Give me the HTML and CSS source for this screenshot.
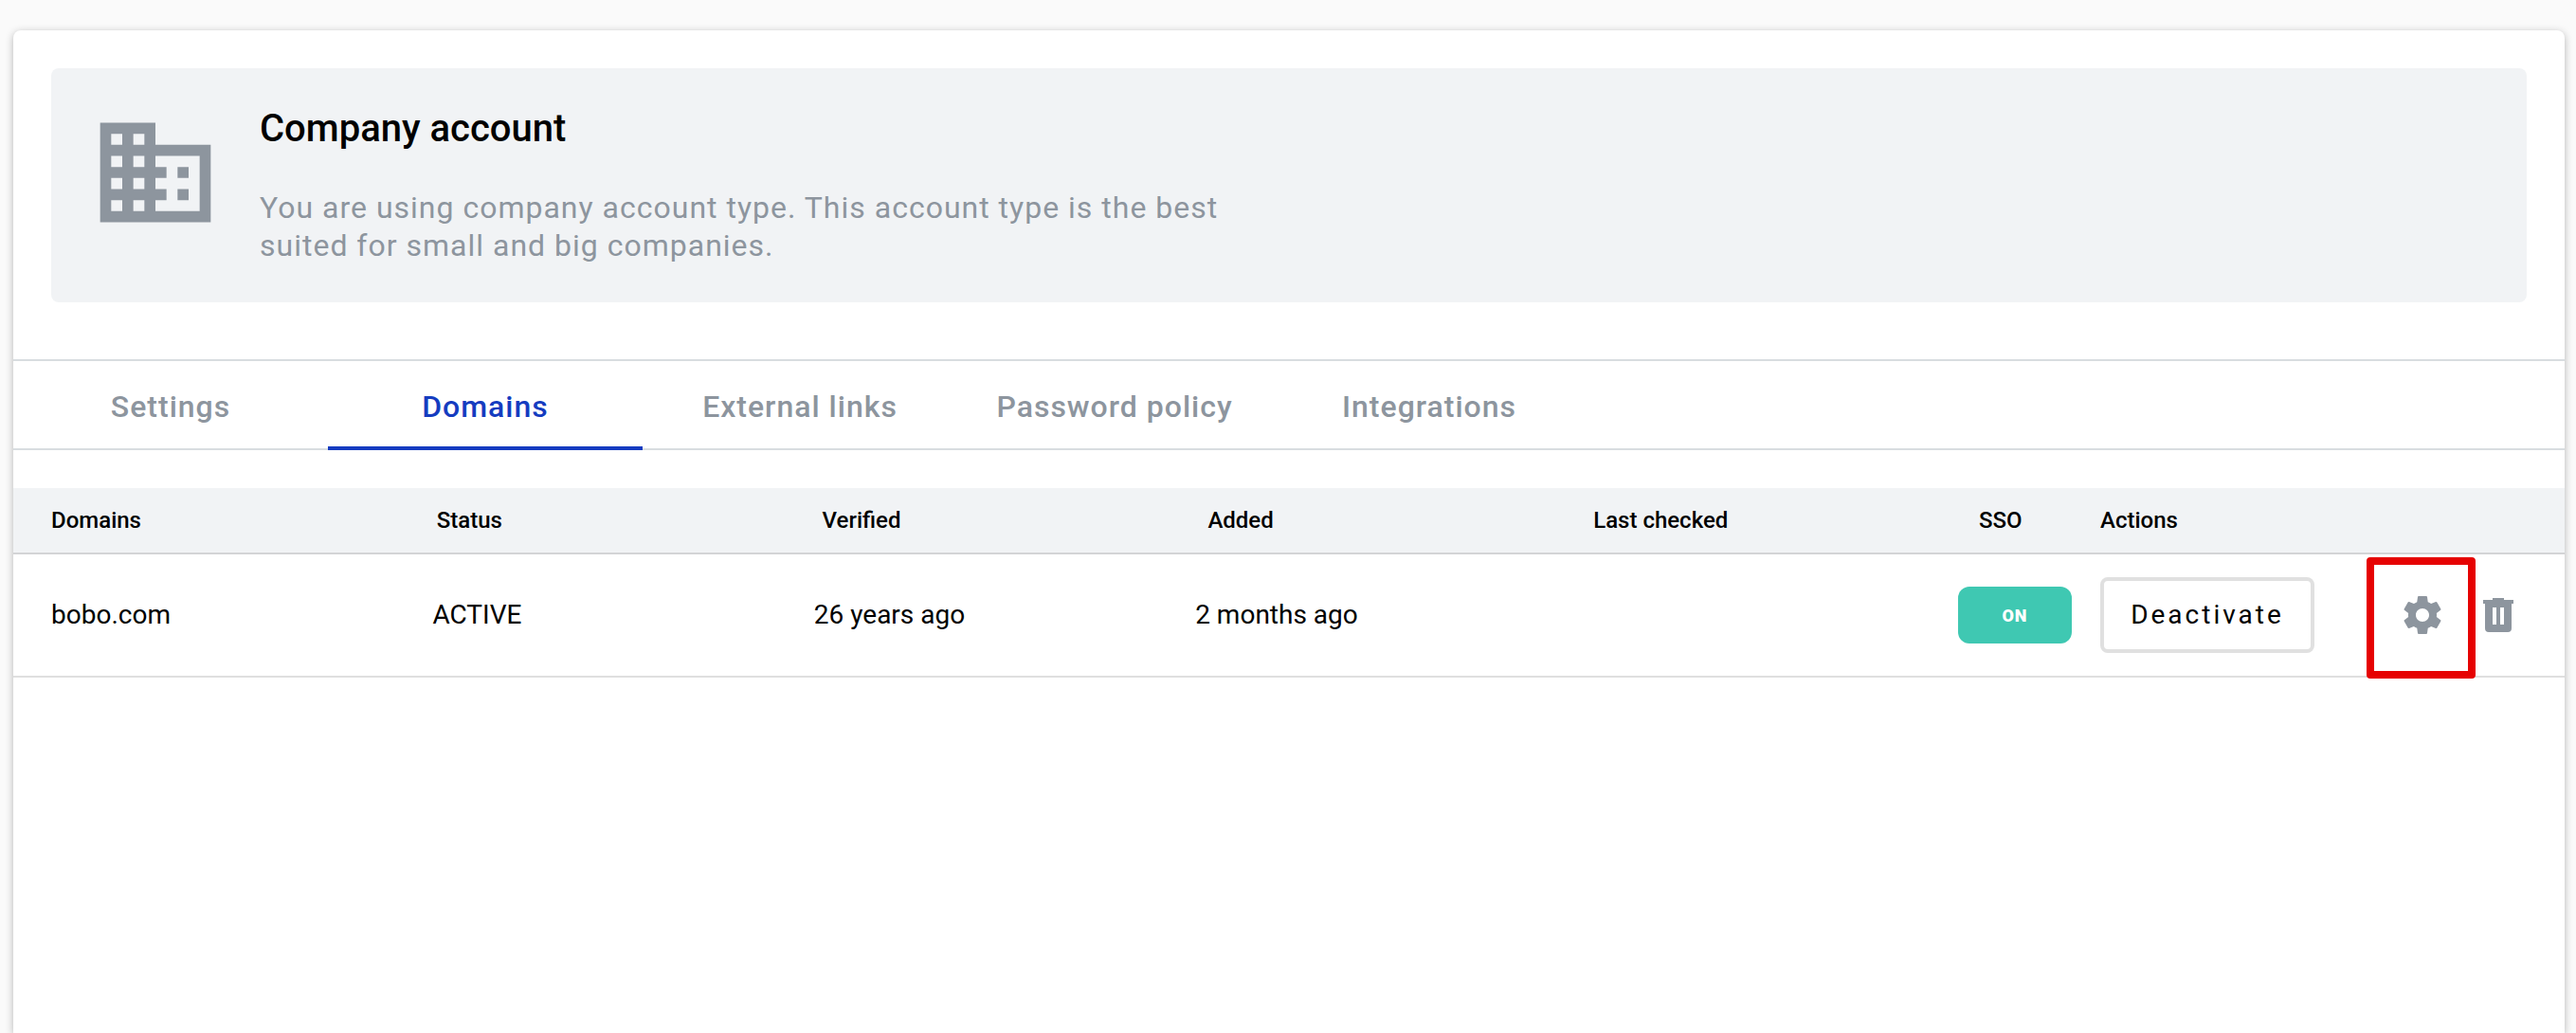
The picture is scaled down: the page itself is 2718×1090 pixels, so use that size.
FILE: index.html
```html
<!DOCTYPE html>
<html lang="en">
<head>
  <meta charset="utf-8">
  <meta name="viewport" content="width=device-width, initial-scale=1">
  <title>Company account</title>
  <link rel="stylesheet" href="styles.css">
</head>
<body>
  <main class="card">
    <section class="banner">
      <svg class="banner-icon" viewBox="0 0 24 24" aria-hidden="true">
        <path d="M12 7V3H2v18h20V7H12zM6 19H4v-2h2v2zm0-4H4v-2h2v2zm0-4H4V9h2v2zm0-4H4V5h2v2zm4 12H8v-2h2v2zm0-4H8v-2h2v2zm0-4H8V9h2v2zm0-4H8V5h2v2zm10 12h-8v-2h2v-2h-2v-2h2v-2h-2V9h8v10zm-2-8h-2v2h2v-2zm0 4h-2v2h2v-2z"/>
      </svg>
      <div class="banner-body">
        <h1 class="banner-title">Company account</h1>
        <p class="banner-text">You are using company account type. This account type is the best suited for small and big companies.</p>
      </div>
    </section>

    <nav class="tabs">
      <a class="tab" href="#settings">Settings</a>
      <a class="tab tab-active" href="#domains" aria-current="page">Domains</a>
      <a class="tab" href="#links">External links</a>
      <a class="tab" href="#policy">Password policy</a>
      <a class="tab" href="#integrations">Integrations</a>
    </nav>

    <table class="domains">
      <thead>
        <tr class="head-row">
          <th scope="col">Domains</th>
          <th scope="col">Status</th>
          <th scope="col">Verified</th>
          <th scope="col">Added</th>
          <th scope="col">Last checked</th>
          <th scope="col">SSO</th>
          <th scope="col">Actions</th>
        </tr>
      </thead>
      <tbody>
        <tr class="data-row">
          <td>bobo.com</td>
          <td>ACTIVE</td>
          <td>26 years ago</td>
          <td>2 months ago</td>
          <td></td>
          <td><button class="sso" type="button" aria-pressed="true">ON</button></td>
          <td class="actions">
            <button class="deactivate" type="button">Deactivate</button>
            <button class="icon-button highlighted" type="button" aria-label="Domain settings">
              <svg class="icon" viewBox="0 0 24 24" aria-hidden="true">
                <path d="M19.43 12.98c.04-.32.07-.64.07-.98s-.03-.66-.07-.98l2.11-1.65c.19-.15.24-.42.12-.64l-2-3.46c-.12-.22-.39-.3-.61-.22l-2.49 1c-.52-.4-1.08-.73-1.69-.98l-.38-2.65C14.46 2.18 14.25 2 14 2h-4c-.25 0-.46.18-.49.42l-.38 2.65c-.61.25-1.17.59-1.69.98l-2.49-1c-.23-.09-.49 0-.61.22l-2 3.46c-.13.22-.07.49.12.64l2.11 1.65c-.04.32-.07.65-.07.98s.03.66.07.98l-2.11 1.65c-.19.15-.24.42-.12.64l2 3.46c.12.22.39.3.61.22l2.49-1c.52.4 1.08.73 1.69.98l.38 2.65c.03.24.24.42.49.42h4c.25 0 .46-.18.49-.42l.38-2.65c.61-.25 1.17-.59 1.69-.98l2.49 1c.23.09.49 0 .61-.22l2-3.46c.12-.22.07-.49-.12-.64l-2.11-1.65zM12 15.5c-1.93 0-3.5-1.57-3.5-3.5s1.57-3.5 3.5-3.5 3.5 1.57 3.5 3.5-1.57 3.5-3.5 3.5z"/>
              </svg>
            </button>
            <button class="icon-button" type="button" aria-label="Delete domain">
              <svg class="icon" viewBox="0 0 24 24" aria-hidden="true">
                <path fill-rule="evenodd" d="M9 3h6v1h5v2h-1v13a2 2 0 0 1-2 2H7a2 2 0 0 1-2-2V6H4V4h5zM9 8v9h2V8zM13 8v9h2V8z"/>
              </svg>
            </button>
          </td>
        </tr>
      </tbody>
    </table>
  </main>
</body>
</html>
```
FILE: styles.css
```css
*,
*::before,
*::after {
  box-sizing: border-box;
}

body {
  display: flex;
  flex-direction: column;
  min-height: 100vh;
  margin: 0;
  padding: 32px 12px 0 14px;
  background: #fafafa;
  color: #000;
  font-family: Roboto, "Liberation Sans", sans-serif;
}

button {
  font-family: inherit;
  cursor: pointer;
}

.card {
  flex: 1;
  background: #fff;
  border-radius: 8px 8px 0 0;
  box-shadow: 0 2px 8px rgba(0, 0, 0, 0.28);
}

.banner {
  display: flex;
  gap: 40px;
  margin: 40px 40px 60px;
  padding: 40px;
  background: #f1f3f5;
  border-radius: 8px;
}

.banner-icon {
  flex: none;
  width: 140px;
  height: 140px;
  fill: #8d959e;
}

.banner-title {
  margin: 0 0 40px;
  font-size: 40px;
  line-height: 47px;
  font-weight: 500;
}

.banner-text {
  max-width: 1060px;
  margin: 0;
  color: #8d959e;
  font-size: 32px;
  line-height: 40px;
  letter-spacing: 1px;
}

.tabs {
  display: flex;
  margin-bottom: 40px;
  border-top: 2px solid #d8dde0;
  box-shadow: inset 0 -2px #d8dde0;
}

.tab {
  flex: 0 1 332px;
  padding: 28px 0 22px;
  border-bottom: 4px solid transparent;
  color: #8d959e;
  font-size: 32px;
  line-height: 40px;
  font-weight: 500;
  letter-spacing: 1px;
  text-align: center;
  text-decoration: none;
}

.tab-active {
  border-color: #153cc0;
  color: #153cc0;
}

.domains {
  display: block;
}

.domains thead,
.domains tbody {
  display: block;
}

.head-row,
.data-row {
  display: grid;
  align-items: center;
  padding: 0 40px;
}

.head-row {
  grid-template-columns: repeat(5, 1fr) 128px 450px;
  min-height: 70px;
  border-bottom: 2px solid #d3d4d6;
  background: #f1f3f5;
}

.data-row {
  grid-template-columns: repeat(5, 1fr) 150px 450px;
  min-height: 130px;
  border-bottom: 2px solid #dfdfdf;
}

.domains th,
.domains td {
  padding: 0;
  text-align: left;
}

.domains th {
  font-size: 24px;
  line-height: 32px;
  font-weight: 500;
}

.domains td {
  font-size: 28px;
  line-height: 36px;
}

.sso {
  display: block;
  width: 120px;
  height: 60px;
  padding: 0;
  border: 0;
  border-radius: 12px;
  background: #3fc8b2;
  color: #fff;
  font-size: 18px;
  font-weight: 900;
  letter-spacing: 1px;
}

.actions {
  display: flex;
  align-items: center;
}

.deactivate {
  width: 226px;
  height: 80px;
  margin-right: auto;
  padding: 0 0 2px;
  border: 4px solid #e0e0e0;
  border-radius: 8px;
  background: #fff;
  color: #000;
  font-size: 28px;
  font-weight: 400;
  letter-spacing: 3px;
}

.icon-button {
  position: relative;
  margin-right: 6px;
  padding: 0;
  border: 0;
  background: none;
}

.icon {
  display: block;
  width: 48px;
  height: 48px;
  fill: #8d959e;
}

.highlighted {
  margin-right: 32px;
}

.highlighted::after {
  content: "";
  position: absolute;
  inset: -37px -32px -43px -35px;
  border: 8px solid #e60202;
  border-radius: 4px;
}
```
